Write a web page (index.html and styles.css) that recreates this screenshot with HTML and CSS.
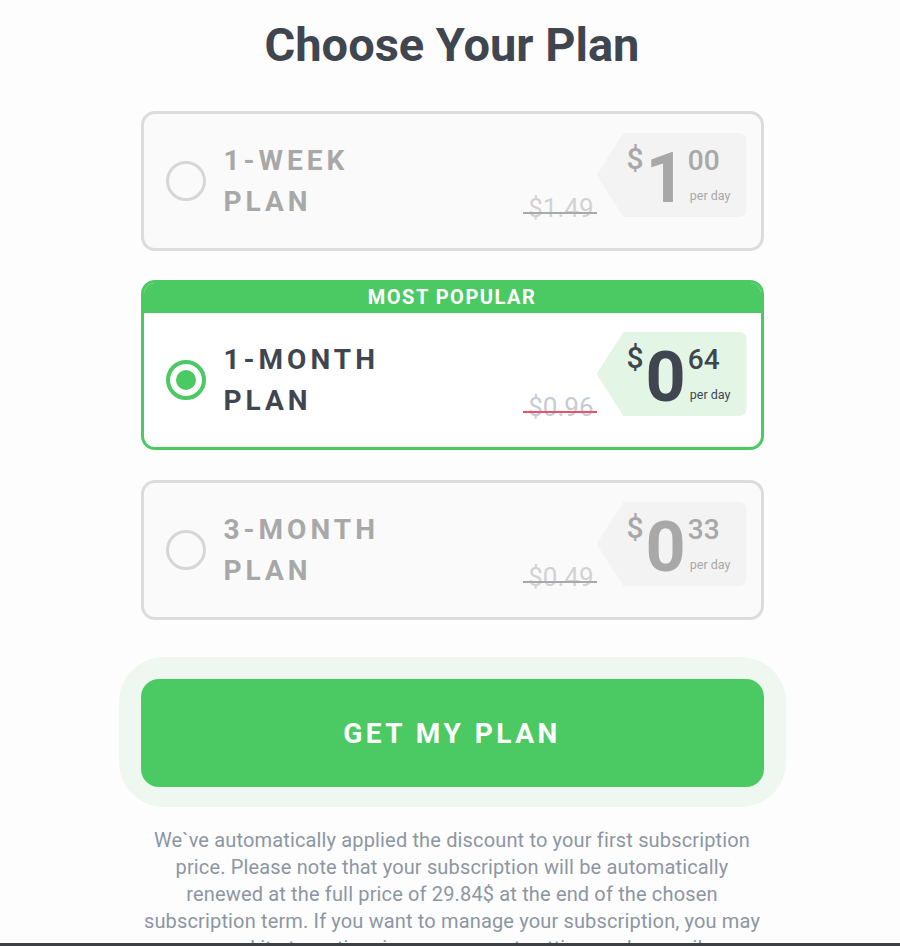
FILE: index.html
```html
<!DOCTYPE html>
<html lang="en">
<head>
    <meta charset="UTF-8">
    <meta name="viewport" content="width=device-width, initial-scale=1.0">
    <title>Choose Your Plan</title>
    <link rel="stylesheet" href="styles.css">
</head>
<body>

    <div class="page">
        <h1 class="title">Choose Your Plan</h1>

        <div class="plans">
            <div class="plan">
                <div class="plan-body">
                    <span class="radio"></span>
                    <div class="plan-name">1-WEEK<br>PLAN</div>
                    <div class="price-wrap">
                        <span class="old-price">$1.49</span>
                        <div class="tag">
                            <span class="cur">$</span>
                            <span class="int">1</span>
                            <div class="dec">
                                <span class="cents">00</span>
                                <span class="per">per day</span>
                            </div>
                        </div>
                    </div>
                </div>
            </div>

            <div class="plan active">
                <div class="plan-head">MOST POPULAR</div>
                <div class="plan-body">
                    <span class="radio"></span>
                    <div class="plan-name">1-MONTH<br>PLAN</div>
                    <div class="price-wrap">
                        <span class="old-price">$0.96</span>
                        <div class="tag">
                            <span class="cur">$</span>
                            <span class="int">0</span>
                            <div class="dec">
                                <span class="cents">64</span>
                                <span class="per">per day</span>
                            </div>
                        </div>
                    </div>
                </div>
            </div>

            <div class="plan">
                <div class="plan-body">
                    <span class="radio"></span>
                    <div class="plan-name">3-MONTH<br>PLAN</div>
                    <div class="price-wrap">
                        <span class="old-price">$0.49</span>
                        <div class="tag">
                            <span class="cur">$</span>
                            <span class="int">0</span>
                            <div class="dec">
                                <span class="cents">33</span>
                                <span class="per">per day</span>
                            </div>
                        </div>
                    </div>
                </div>
            </div>
        </div>

        <div class="cta-wrap">
            <button class="cta">GET MY PLAN</button>
        </div>

        <!-- line breaks follow the original wrapping -->
        <p class="note">We`ve automatically applied the discount to your first subscription<br>
            price. Please note that your subscription will be automatically<br>
            renewed at the full price of 29.84$ at the end of the chosen<br>
            subscription term. If you want to manage your subscription, you may<br>
            cancel it at any time in your account settings or by email.</p>
    </div>

    <div class="bottom-bar"></div>

</body>
</html>
```

FILE: styles.css
```css
body {
    margin: 0;
    padding-left: 4px;
    font-family: Roboto, "Liberation Sans", Arial, sans-serif;
    background-color: #fdfdfd;
    color: #3f4650;
}
.page {
    width: 623px;
    margin: 0 auto;
}
.title {
    font-size: 47px;
    font-weight: 700;
    line-height: 54px;
    text-align: center;
    margin: 18px 0 39px;
    color: #3f4650;
}
.plans {
    display: flex;
    flex-direction: column;
    gap: 29px;
}
.plan {
    border: 3px solid #dcdcdc;
    border-radius: 14px;
    background: #fafafa;
    overflow: hidden;
}
.plan-head {
    background: #4bca63;
    color: white;
    height: 30px;
    line-height: 28px;
    text-align: center;
    font-size: 20px;
    font-weight: 700;
    letter-spacing: 1.5px;
}
.plan-body {
    display: flex;
    align-items: center;
    height: 134px;
    padding: 0 14px 0 22px;
}
.radio {
    width: 34px;
    height: 34px;
    border: 3px solid #d6d6d6;
    border-radius: 50%;
    display: flex;
    align-items: center;
    justify-content: center;
    flex-shrink: 0;
}
.plan-name {
    margin-left: 18px;
    flex: 1;
    font-size: 28px;
    font-weight: 700;
    line-height: 41px;
    letter-spacing: 4px;
    color: #a8a8a8;
}
.price-wrap {
    align-self: flex-start;
    margin-top: 19px;
    display: flex;
    align-items: flex-end;
}
.old-price {
    position: relative;
    font-size: 26px;
    line-height: 26px;
    color: #d2d2d2;
    margin-right: 3px;
    margin-bottom: -4px;
}
.old-price::after {
    content: "";
    position: absolute;
    left: -5px;
    right: -3px;
    top: 17px;
    height: 2px;
    background: #a9a9a9;
}
.tag {
    width: 150px;
    height: 84px;
    box-sizing: border-box;
    padding: 10px 0 0 30px;
    background: #f3f3f3;
    border-radius: 8px;
    clip-path: polygon(27px 0, 100% 0, 100% 100%, 27px 100%, 0 50%);
    display: flex;
    align-items: flex-start;
    color: #a8a8a8;
}
.cur {
    font-size: 30px;
    line-height: 30px;
    font-weight: 500;
    margin-top: 1px;
}
.int {
    font-size: 70px;
    line-height: 70px;
    font-weight: 700;
    margin-left: 2px;
    letter-spacing: -1px;
}
.dec {
    display: flex;
    flex-direction: column;
    margin-left: 3px;
}
.cents {
    font-size: 28px;
    line-height: 28px;
    font-weight: 500;
    margin-top: 4px;
}
.per {
    font-size: 12.5px;
    line-height: 13px;
    margin-top: 14px;
    margin-left: 2px;
    white-space: nowrap;
}

.plan.active {
    border-color: #4bca63;
    background: white;
    margin-bottom: 1px;
}
.plan.active .radio {
    width: 32px;
    height: 32px;
    border: 4px solid #4bca63;
}
.plan.active .radio::after {
    content: "";
    width: 20px;
    height: 20px;
    border-radius: 50%;
    background: #4bca63;
}
.plan.active .plan-name {
    color: #3f4650;
}
.plan.active .old-price {
    color: #c6ccd4;
}
.plan.active .old-price::after {
    background: #e8526a;
}
.plan.active .tag {
    background: #e3f6e6;
    color: #3f4650;
}

.cta-wrap {
    margin: 37px -22px 0;
    padding: 22px 22px 20px;
    background: #eef8f0;
    border-radius: 45px;
}
.cta {
    display: block;
    width: 100%;
    height: 108px;
    border: none;
    border-radius: 18px;
    background: #4bca63;
    color: white;
    font-family: Roboto, "Liberation Sans", Arial, sans-serif;
    font-size: 28px;
    font-weight: 700;
    letter-spacing: 3.5px;
    cursor: pointer;
}
.note {
    margin: 20px -20px 0;
    font-size: 20px;
    line-height: 27px;
    letter-spacing: 0.15px;
    text-align: center;
    white-space: nowrap;
    color: #8c96a3;
}
.bottom-bar {
    position: fixed;
    left: 0;
    right: 0;
    bottom: 0;
    height: 3px;
    background: #3d4145;
}
```
